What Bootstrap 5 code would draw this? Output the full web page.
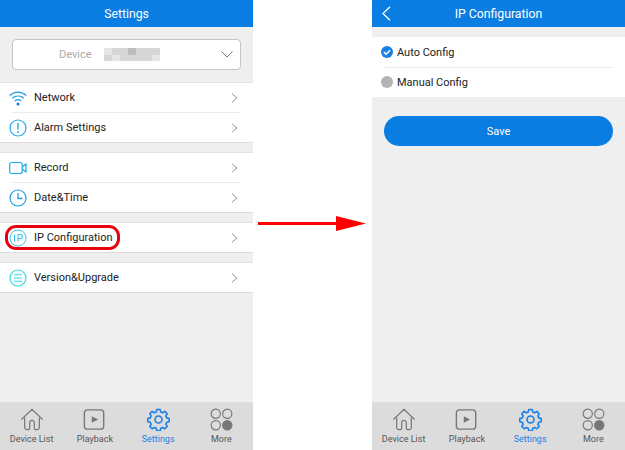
<!DOCTYPE html>
<html lang="en">

<head>
  <meta charset="UTF-8">
  <meta name="viewport" content="width=device-width, initial-scale=1">
  <title>IP Configuration</title>
  <link href="https://cdn.jsdelivr.net/npm/bootstrap@5.3.3/dist/css/bootstrap.min.css" rel="stylesheet">
  <style>
    html, body {
      height: 450px;
      overflow: hidden;
      background: #fff;
    }

    body {
      font-family: "Roboto", "Liberation Sans", sans-serif;
      color: #222;
      font-size: 11px;
    }

    .phone {
      width: 253px;
      height: 450px;
      background: #efeff0;
    }

    .arrow-gap {
      width: 119px;
      padding-bottom: 3px;
    }

    .top-bar {
      height: 27px;
      background: #0a7de2;
      color: #fff;
      font-size: 12.25px;
      padding-top: 2px;
    }

    .back-btn {
      left: 10px;
      top: 6px;
    }

    .device-wrap {
      padding: 12px;
    }

    .device-box {
      height: 31px;
      background: #fff;
      border: 1px solid #c4c4c4;
      border-radius: 4px;
      color: #aaa;
      font-size: 11px;
      padding-left: 46px;
      padding-right: 7px;
    }

    .device-box span,
    .menu-row span,
    .ip-row span {
      padding-top: 2px;
    }

    .blur-box {
      width: 56px;
      height: 13px;
      margin-left: 12px;
      display: grid;
      grid-template-columns: repeat(7, 8px);
      grid-template-rows: repeat(2, 6.5px);
    }

    .blur-box i { background: #d6d6d6; }
    .blur-box i.b1 { background: #e6e6e6; }
    .blur-box i.b2 { background: #bdbdbd; }

    .menu-group {
      background: #fff;
      border-top: 1px solid #e2e2e2;
      border-bottom: 1px solid #dcdcdc;
      margin-bottom: 9px;
    }

    .menu-row {
      height: 29px;
      padding-left: 9px;
      padding-right: 15px;
    }

    .menu-icon {
      width: 18px;
      height: 18px;
      margin-right: 7px;
      flex: none;
    }

    .menu-line {
      height: 1px;
      background: #ececec;
      margin: 0 12px;
    }

    .red-ring {
      left: 5px;
      top: 2px;
      width: 115px;
      height: 25px;
      border: 3px solid #e8000e;
      border-radius: 11px;
    }

    .tab-bar {
      height: 48px;
      background: #dcdcdc;
      padding-top: 6px;
    }

    .tab-item {
      width: 63.25px;
      font-size: 9px;
      color: #555;
      line-height: 11px;
    }

    .tab-item svg {
      height: 23px;
      margin-bottom: 3px;
    }

    .tab-item.on {
      color: #1a7fe6;
    }

    .ip-group {
      background: #fff;
      margin-top: 10px;
      margin-bottom: 19px;
    }

    .ip-row {
      height: 29.5px;
      padding-left: 9px;
      font-size: 11px;
    }

    .save-btn {
      display: block;
      width: 229px;
      height: 30px;
      margin: 0 auto;
      padding: 2px 0 0;
      background: #0a7de2;
      border: 0;
      border-radius: 15px;
      color: #fff;
      font-size: 11px;
    }
  </style>
</head>

<body>
  <svg width="0" height="0" class="position-absolute">
    <symbol id="chev" viewBox="0 0 8 12"><path d="M1 1l6 5-6 5" fill="none" stroke="#8a8a8a" stroke-width="1.1"/></symbol>
    <symbol id="home" viewBox="0 0 26 25"><path d="M1.500 12.500L13 1.500l11.500 11M5 10.500V21a2.500 2.500 0 0 0 2.500 2.500h1.500a1.500 1.500 0 0 0 1.500-1.500V16a2.500 2.500 0 0 1 5 0v6a1.500 1.500 0 0 0 1.500 1.500H19A2.500 2.500 0 0 0 21 21V10.500" fill="none" stroke="#777" stroke-width="1.300"/></symbol>
    <symbol id="play" viewBox="0 0 25 25"><rect x="1.500" y="2" width="21" height="21" rx="3.500" fill="none" stroke="#777" stroke-width="1.500"/><path d="M9.500 9l7 3.500-7 3.500z" fill="#777"/></symbol>
    <symbol id="gear" viewBox="0 0 25 25"><path d="M10.500 1.500h4l.7 3 2.400 1 2.600-1.600 2.800 2.800-1.600 2.600 1 2.400 3 .7v4l-3 .7-1 2.400 1.600 2.600-2.800 2.800-2.600-1.600-2.400 1-.7 3h-4l-.7-3-2.400-1-2.600 1.600-2.800-2.800 1.600-2.600-1-2.400-3-.7v-4l3-.7 1-2.400-1.600-2.600 2.800-2.800 2.600 1.600 2.400-1z" transform="translate(1.250 .2) scale(.9)" fill="none" stroke="#1a7fe6" stroke-width="1.900" stroke-linejoin="round"/><circle cx="12.500" cy="12.500" r="3.800" fill="none" stroke="#1a7fe6" stroke-width="1.700"/></symbol>
    <symbol id="more" viewBox="0 0 24 24"><g fill="none" stroke="#777" stroke-width="1.200"><circle cx="6" cy="6" r="4.800"/><circle cx="18" cy="6" r="4.800"/><circle cx="6" cy="18" r="4.800"/></g><circle cx="18" cy="18" r="5.400" fill="#777"/></symbol>
  </svg>

  <div class="d-flex">
    <!-- left screen -->
    <div class="phone d-flex flex-column">
      <div class="top-bar d-flex align-items-center justify-content-center">Settings</div>
      <div class="flex-grow-1">
        <div class="device-wrap">
          <div class="device-box d-flex align-items-center">
            <span>Device</span>
            <div class="blur-box">
              <i class="b1"></i><i></i><i></i><i class="b2"></i><i></i><i></i><i></i>
              <i></i><i class="b1"></i><i></i><i></i><i></i><i></i><i class="b1"></i>
            </div>
            <svg class="ms-auto" width="12" height="7" viewBox="0 0 12 7"><path d="M.5.5L6 6l5.500-5.500" fill="none" stroke="#777" stroke-width="1"/></svg>
          </div>
        </div>

        <div class="menu-group">
          <div class="menu-row d-flex align-items-center">
            <svg class="menu-icon" viewBox="0 0 18 18"><g fill="none" stroke="#1f9be8" stroke-width="1.200"><path d="M.7 6.500C5.500 2 12.500 2 17.300 6.500"/><path d="M3.200 9.300c3.500-3 8.100-3 11.600 0"/><path d="M5.800 12c1.900-1.500 4.500-1.500 6.400 0"/></g><circle cx="9" cy="15" r="1.500" fill="#1a6fd0"/></svg>
            <span>Network</span>
            <svg class="ms-auto" width="7" height="10"><use href="#chev"/></svg>
          </div>
          <div class="menu-line"></div>
          <div class="menu-row d-flex align-items-center">
            <svg class="menu-icon" viewBox="0 0 18 18"><circle cx="9" cy="9" r="8" fill="none" stroke="#1fa8ea" stroke-width="1.200"/><path d="M9 4v6.500" stroke="#1fa8ea" stroke-width="1.400"/><circle cx="9" cy="13" r="1" fill="#1fa8ea"/></svg>
            <span>Alarm Settings</span>
            <svg class="ms-auto" width="7" height="10"><use href="#chev"/></svg>
          </div>
        </div>

        <div class="menu-group">
          <div class="menu-row d-flex align-items-center">
            <svg class="menu-icon" viewBox="0 0 18 18"><rect x=".7" y="3.500" width="12.500" height="11" rx="2" fill="none" stroke="#1fa8ea" stroke-width="1.200"/><path d="M13.200 8l3.800-3v8l-3.800-3" fill="none" stroke="#1fa8ea" stroke-width="1.200"/></svg>
            <span>Record</span>
            <svg class="ms-auto" width="7" height="10"><use href="#chev"/></svg>
          </div>
          <div class="menu-line"></div>
          <div class="menu-row d-flex align-items-center">
            <svg class="menu-icon" viewBox="0 0 18 18"><circle cx="9" cy="9" r="8" fill="none" stroke="#1f9be8" stroke-width="1.200"/><path d="M9 4v5.500h4.500" fill="none" stroke="#1f9be8" stroke-width="1.300"/></svg>
            <span>Date&amp;Time</span>
            <svg class="ms-auto" width="7" height="10"><use href="#chev"/></svg>
          </div>
        </div>

        <div class="menu-group position-relative">
          <div class="menu-row d-flex align-items-center">
            <svg class="menu-icon" viewBox="0 0 18 18"><circle cx="9" cy="9" r="8" fill="none" stroke="#3cc4ec" stroke-width="1"/><path d="M5.500 5.500v7M9 12.500v-7h2.300a2 2 0 0 1 0 4.200H9" fill="none" stroke="#3cc4ec" stroke-width="1.100"/></svg>
            <span>IP Configuration</span>
            <svg class="ms-auto" width="7" height="10"><use href="#chev"/></svg>
          </div>
          <div class="red-ring position-absolute"></div>
        </div>

        <div class="menu-group">
          <div class="menu-row d-flex align-items-center">
            <svg class="menu-icon" viewBox="0 0 18 18"><circle cx="9" cy="9" r="8" fill="none" stroke="#2edbe0" stroke-width="1.200"/><path d="M5 5.800h8M5 9h8M5 12.200h8" stroke="#2edbe0" stroke-width="1.100"/></svg>
            <span>Version&amp;Upgrade</span>
            <svg class="ms-auto" width="7" height="10"><use href="#chev"/></svg>
          </div>
        </div>
      </div>
      <div class="tab-bar d-flex">
        <div class="tab-item d-flex flex-column align-items-center"><svg width="24"><use href="#home"/></svg>Device List</div>
        <div class="tab-item d-flex flex-column align-items-center"><svg width="23"><use href="#play"/></svg>Playback</div>
        <div class="tab-item on d-flex flex-column align-items-center"><svg width="23"><use href="#gear"/></svg>Settings</div>
        <div class="tab-item d-flex flex-column align-items-center"><svg width="23"><use href="#more"/></svg>More</div>
      </div>
    </div>

    <!-- arrow -->
    <div class="arrow-gap d-flex align-items-center">
      <svg width="119" height="16" viewBox="0 0 119 16"><path d="M5 6h78V0l30 7.500L83 15V9H5z" fill="#f00"/></svg>
    </div>

    <!-- right screen -->
    <div class="phone d-flex flex-column">
      <div class="top-bar d-flex align-items-center justify-content-center position-relative">
        <svg class="back-btn position-absolute" width="9" height="15" viewBox="0 0 9 15"><path d="M8 .7L1 7.500 8 14.300" fill="none" stroke="#fff" stroke-width="1.300"/></svg>
        IP Configuration
      </div>
      <div class="flex-grow-1">
        <div class="ip-group">
          <div class="ip-row d-flex align-items-center">
            <svg class="me-1" width="12" height="12" viewBox="0 0 12 12"><circle cx="6" cy="6" r="6" fill="#1a7fe6"/><path d="M2.800 6l2.300 2.300 4-4" fill="none" stroke="#fff" stroke-width="1.500"/></svg>
            <span>Auto Config</span>
          </div>
          <div class="menu-line"></div>
          <div class="ip-row d-flex align-items-center">
            <svg class="me-1" width="12" height="12" viewBox="0 0 12 12"><circle cx="6" cy="6" r="6" fill="#b4b4b4"/></svg>
            <span>Manual Config</span>
          </div>
        </div>
        <button class="btn save-btn" type="button">Save</button>
      </div>
      <div class="tab-bar d-flex">
        <div class="tab-item d-flex flex-column align-items-center"><svg width="24"><use href="#home"/></svg>Device List</div>
        <div class="tab-item d-flex flex-column align-items-center"><svg width="23"><use href="#play"/></svg>Playback</div>
        <div class="tab-item on d-flex flex-column align-items-center"><svg width="23"><use href="#gear"/></svg>Settings</div>
        <div class="tab-item d-flex flex-column align-items-center"><svg width="23"><use href="#more"/></svg>More</div>
      </div>
    </div>
  </div>

  <script src="https://cdn.jsdelivr.net/npm/bootstrap@5.3.3/dist/js/bootstrap.bundle.min.js"></script>
</body>

</html>
